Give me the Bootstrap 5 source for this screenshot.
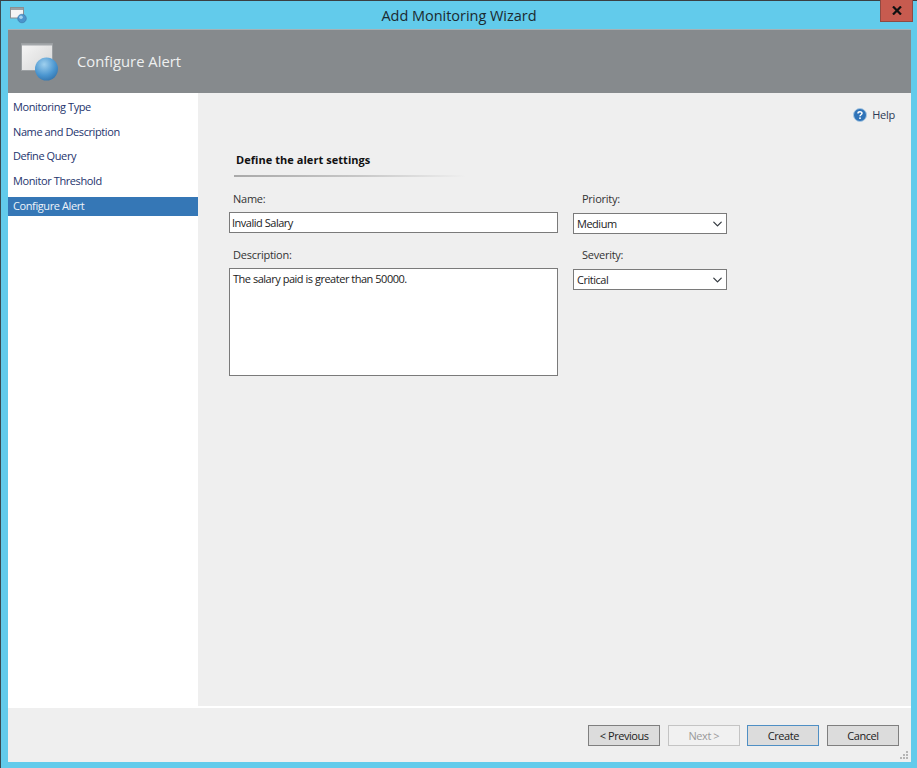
<!DOCTYPE html>
<html lang="en">
<head>
<meta charset="utf-8">
<title>Add Monitoring Wizard</title>
<link href="https://cdn.jsdelivr.net/npm/bootstrap@5.3.0/dist/css/bootstrap.min.css" rel="stylesheet">
<style>
html,body{margin:0;height:768px;overflow:hidden;background:#62cbeb}
body{font-family:"Open Sans","Liberation Sans",sans-serif;font-size:11px;color:#333;letter-spacing:-.25px}
.wiz-window{width:917px;height:768px;background:#62cbeb;border-top:1px solid #3a3f42;border-left:1px solid #3a4a50;padding-right:6px;padding-left:7px;padding-bottom:6px}
.wiz-title{height:28px;flex:none;margin-left:-7px;margin-right:-6px;position:relative}
.wiz-title-icon{margin:6px 0 0 9px;display:block}
.wiz-title-text{position:absolute;left:0;right:0;top:5px;text-align:center;font-size:14.5px;color:#1c2a30;letter-spacing:-.03px;line-height:20px}
.wiz-close{position:absolute;right:4px;top:-1px;width:33px;height:22px;background:#c75b4f;border:1px solid #8f4a42;border-top:0;display:flex;align-items:center;justify-content:center;padding:0}
.wiz-client{height:733px;flex:none;background:#efefef;border-top:1px solid #a7b0b4}
.wiz-head{height:63px;flex:none;background:#868a8d;padding-left:13px;gap:16px}
.wiz-head-title{font-size:14.8px;color:#eef0f0;letter-spacing:0}
.wiz-body{height:615px;flex:none}
.wiz-side.list-group{width:190px;background:#fff;border-radius:0;padding-top:5px}
.wiz-side .list-group-item{border:0;border-radius:0;background:transparent;color:#24346d;padding:0 5px;height:19px;line-height:18px;font-size:11px;margin-bottom:5.500px;letter-spacing:-.4px}
.wiz-side .list-group-item.active{background:#3577b6;color:#eef4fa;margin-top:1px}
.wiz-main{background:#efefef;flex:1;position:relative;border-bottom:2px solid #fff}
.wiz-help{position:absolute;top:14px;right:16px;gap:5px;font-size:11px;color:#2c3a55}
.wiz-heading{margin:59px 0 0 38px;font-weight:700;font-size:11px;color:#111;letter-spacing:.05px;line-height:15px}
.wiz-rule{margin:8px 0 0 36px;width:232px;height:2px;background:linear-gradient(90deg,#a9a9a9,#c8c8c8 55%,#efefef)}
.wiz-form{margin:14px 0 0 31px;gap:15px}
.wiz-left{width:329px}
.wiz-right{width:154px}
.wiz-label{display:block;margin:0 0 4px 4px;line-height:15px;height:17px;color:#333}
.wiz-label.wiz-gap{margin-top:13px;margin-bottom:5px;line-height:17px}
.wiz-right .wiz-label{margin-left:9px;margin-bottom:5px}
.wiz-right .wiz-label.wiz-gap{margin-top:12px;margin-bottom:6px}
.wiz-input.form-control,.wiz-input.form-select{font-size:11px;line-height:16px;color:#222;border:1px solid #7a7a7a;border-radius:0;padding:1px 2px;height:21px;background-color:#fff;letter-spacing:-.48px;box-shadow:none}
.wiz-input.form-select{padding:1px 20px 1px 3px;background-position:right 3px center;background-size:11px 10px}
.wiz-input.wiz-area{height:108px;resize:none;padding:2px 3px}
.wiz-foot{height:54px;flex:none;padding:17px 12px 0 0;gap:7.600px;position:relative}
.wiz-btn.btn{width:72px;height:21px;padding:0;font-size:11px;line-height:19px;border-radius:0;background:#dcdcdc;border:1px solid #7f7f7f;color:#222;letter-spacing:-.45px}
.wiz-btn.btn.disabled,.wiz-btn.btn:disabled{background:#f1f1f1;border-color:#c4c4c4;color:#9a9a9a;opacity:1}
.wiz-btn.wiz-default.btn{border-color:#4f8fc4}
.wiz-grip{position:absolute;right:2px;bottom:2px}
</style>
</head>
<body>
<div class="wiz-window d-flex flex-column">
  <div class="wiz-title">
    <svg class="wiz-title-icon" width="18" height="18" viewBox="0 0 18 18"><rect x=".5" y=".5" width="13" height="10.500" fill="#f5f5f5" stroke="#8a8f92"/><rect x="1" y="1" width="12" height="2" fill="#9aa0a4"/><circle cx="12" cy="11.500" r="4.300" fill="#4a94cc" stroke="#3a75a6" stroke-width=".6"/><circle cx="11" cy="10.300" r="1.800" fill="#a5d2ee"/></svg>
    <div class="wiz-title-text">Add Monitoring Wizard</div>
    <button class="wiz-close" type="button" aria-label="Close"><svg width="10" height="9" viewBox="0 0 10 9"><path d="M1 .5 9 8.500M9 .5 1 8.500" stroke="#111" stroke-width="2.200" fill="none"/></svg></button>
  </div>
  <div class="wiz-client d-flex flex-column">
    <div class="wiz-head d-flex align-items-center">
      <svg width="40" height="40" viewBox="0 0 40 40"><defs><linearGradient id="pg" x1="0" y1="0" x2="1" y2="1"><stop offset="0" stop-color="#f6f6f6"/><stop offset="1" stop-color="#d5d5d5"/></linearGradient><radialGradient id="bl" cx=".4" cy=".3" r=".8"><stop offset="0" stop-color="#9fd0ee"/><stop offset=".6" stop-color="#4b96d0"/><stop offset="1" stop-color="#2f6fa8"/></radialGradient></defs><rect x=".5" y="1.500" width="31" height="27" fill="url(#pg)" stroke="#9b9fa2"/><rect x="1" y="2" width="30" height="1.500" fill="#a2a6a9"/><circle cx="25.500" cy="27" r="11.500" fill="url(#bl)"/></svg>
      <div class="wiz-head-title">Configure Alert</div>
    </div>
    <div class="wiz-body d-flex">
      <div class="wiz-side list-group">
        <a class="list-group-item" href="#">Monitoring Type</a>
        <a class="list-group-item" href="#">Name and Description</a>
        <a class="list-group-item" href="#">Define Query</a>
        <a class="list-group-item" href="#">Monitor Threshold</a>
        <a class="list-group-item active" href="#">Configure Alert</a>
      </div>
      <div class="wiz-main">
        <div class="wiz-help d-flex align-items-center">
          <svg width="14" height="14" viewBox="0 0 14 14"><circle cx="7" cy="7" r="6.500" fill="#2f73b8" stroke="#a9c8e2"/><path d="M5 5.400C5 3.200 9 3.200 9 5.300 9 6.800 7 6.700 7 8.300" fill="none" stroke="#fff" stroke-width="1.500"/><rect x="6.200" y="9.400" width="1.600" height="1.600" fill="#fff"/></svg>
          <span>Help</span>
        </div>
        <div class="wiz-heading">Define the alert settings</div>
        <div class="wiz-rule"></div>
        <div class="wiz-form d-flex">
          <div class="wiz-left">
            <label class="wiz-label" for="fName">Name:</label>
            <input id="fName" class="form-control wiz-input" type="text" value="Invalid Salary">
            <label class="wiz-label wiz-gap" for="fDesc">Description:</label>
            <textarea id="fDesc" class="form-control wiz-input wiz-area">The salary paid is greater than 50000.</textarea>
          </div>
          <div class="wiz-right">
            <label class="wiz-label" for="fPrio">Priority:</label>
            <select id="fPrio" class="form-select wiz-input"><option>Medium</option></select>
            <label class="wiz-label wiz-gap" for="fSev">Severity:</label>
            <select id="fSev" class="form-select wiz-input"><option>Critical</option></select>
          </div>
        </div>
      </div>
    </div>
    <div class="wiz-foot d-flex justify-content-end">
      <button class="btn wiz-btn" type="button">&lt; Previous</button>
      <button class="btn wiz-btn" type="button" disabled>Next &gt;</button>
      <button class="btn wiz-btn wiz-default" type="button">Create</button>
      <button class="btn wiz-btn" type="button">Cancel</button>
      <svg class="wiz-grip" width="9" height="9" viewBox="0 0 9 9" fill="#b5b5b5"><rect x="6" y="0" width="2" height="2"/><rect x="3" y="3" width="2" height="2"/><rect x="6" y="3" width="2" height="2"/><rect x="0" y="6" width="2" height="2"/><rect x="3" y="6" width="2" height="2"/><rect x="6" y="6" width="2" height="2"/></svg>
    </div>
  </div>
</div>
</body>
</html>
